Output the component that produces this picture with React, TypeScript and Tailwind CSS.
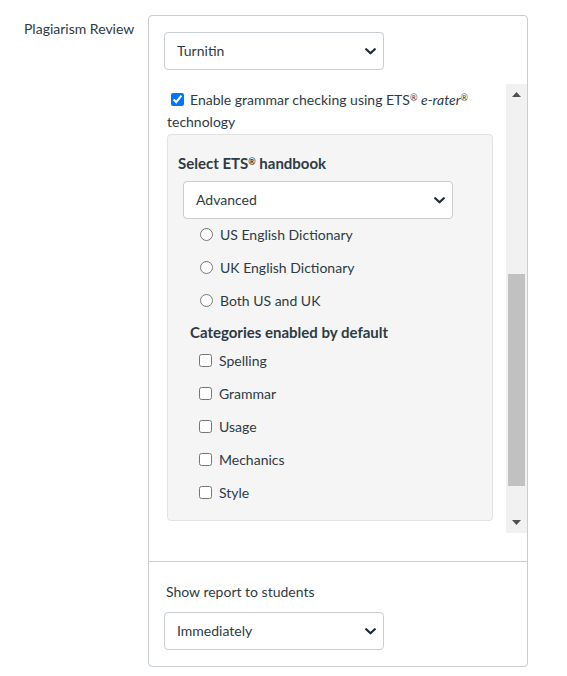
import React from "react";

function Chevron() {
  return (
    <svg width="11" height="7" viewBox="0 0 11 7" className="shrink-0">
      <polyline points="1.2,1.2 5.5,5.3 9.8,1.2" fill="none" stroke="#1f2a33" strokeWidth="2.2" strokeLinecap="round" strokeLinejoin="round" />
    </svg>
  );
}

function FakeSelect({ value, w, pl }: { value: string; w: string; pl: string }) {
  return (
    <div className={`${w} h-[38px] border border-[#c7cdd1] rounded-[4px] bg-white flex items-center justify-between ${pl} pr-[7px] text-[#2d3b45]`}>
      <span className="-mt-[2px]">{value}</span>
      <Chevron />
    </div>
  );
}

function Radio({ label }: { label: string }) {
  return (
    <div className="h-[33px] flex items-center pl-[32px]">
      <input type="radio" name="dict" className="m-0 w-[13px] h-[13px]" />
      <span className="ml-[7px]">{label}</span>
    </div>
  );
}

function Check({ label }: { label: string }) {
  return (
    <div className="h-[33px] flex items-center pl-[31px]">
      <input type="checkbox" className="m-0 w-[13px] h-[13px]" />
      <span className="ml-[7px]">{label}</span>
    </div>
  );
}

export default function App() {
  return (
    <div className="w-[567px] h-[676px] bg-white flex pt-[15px] font-['Lato','Noto_Sans',sans-serif] text-[14px] leading-[21px] text-[#2d3b45]">
      <div className="w-[148px] pl-[24px] pt-[3px] text-[#2d3b45]">Plagiarism Review</div>
      <div className="w-[380px] self-start border border-[#c7cdd1] rounded-[4px] flex flex-col">
        <div className="pt-[16px] pl-[15px]">
          <FakeSelect value="Turnitin" w="w-[220px]" pl="pl-[12px]" />
        </div>
        <div className="mt-[14px] h-[449px] flex">
          <div className="flex-1 pl-[18px] pr-[13px] pt-[5px] overflow-hidden">
            <div className="leading-[22px]">
              <input type="checkbox" defaultChecked className="m-0 ml-[4px] mr-[6px] w-[13px] h-[13px] align-[-1px]" />
              Enable grammar checking using ETS<sup className="text-[9px]">®</sup> <i>e-rater</i>
              <sup className="text-[9px]">®</sup> technology
            </div>
            <div className="mt-[1px] bg-[#f5f5f5] border border-[#e3e3e3] rounded-[4px] pt-[17px] pb-[11px]">
              <div className="pl-[10px] font-bold text-[15px] leading-[22px]">
                Select ETS<sup className="text-[9px]">®</sup> handbook
              </div>
              <div className="mt-[7px] pl-[15px]">
                <FakeSelect value="Advanced" w="w-[270px]" pl="pl-[12px]" />
              </div>
              <div className="-mt-[1px]">
                <Radio label="US English Dictionary" />
                <Radio label="UK English Dictionary" />
                <Radio label="Both US and UK" />
              </div>
              <div className="mt-[4px] mb-[1px] pl-[22px] font-bold text-[15px] leading-[22px]">Categories enabled by default</div>
              <Check label="Spelling" />
              <Check label="Grammar" />
              <Check label="Usage" />
              <Check label="Mechanics" />
              <Check label="Style" />
            </div>
          </div>
          <div className="w-[21px] bg-[#f1f1f1] flex flex-col">
            <div className="h-[21px] flex items-center justify-center">
              <svg width="9" height="5" viewBox="0 0 9 5"><polygon points="0,5 4.5,0 9,5" fill="#505050" /></svg>
            </div>
            <div className="flex-1 pt-[169px] px-[2px]">
              <div className="h-[212px] bg-[#c1c1c1]" />
            </div>
            <div className="h-[21px] flex items-center justify-center">
              <svg width="9" height="5" viewBox="0 0 9 5"><polygon points="0,0 9,0 4.5,5" fill="#505050" /></svg>
            </div>
          </div>
        </div>
        <div className="mt-[28px] border-t border-[#c7cdd1] pt-[19px] pl-[15px] pb-[16px]">
          <div className="pl-[2px]">Show report to students</div>
          <div className="mt-[10px]">
            <FakeSelect value="Immediately" w="w-[220px]" pl="pl-[12px]" />
          </div>
        </div>
      </div>
    </div>
  );
}
